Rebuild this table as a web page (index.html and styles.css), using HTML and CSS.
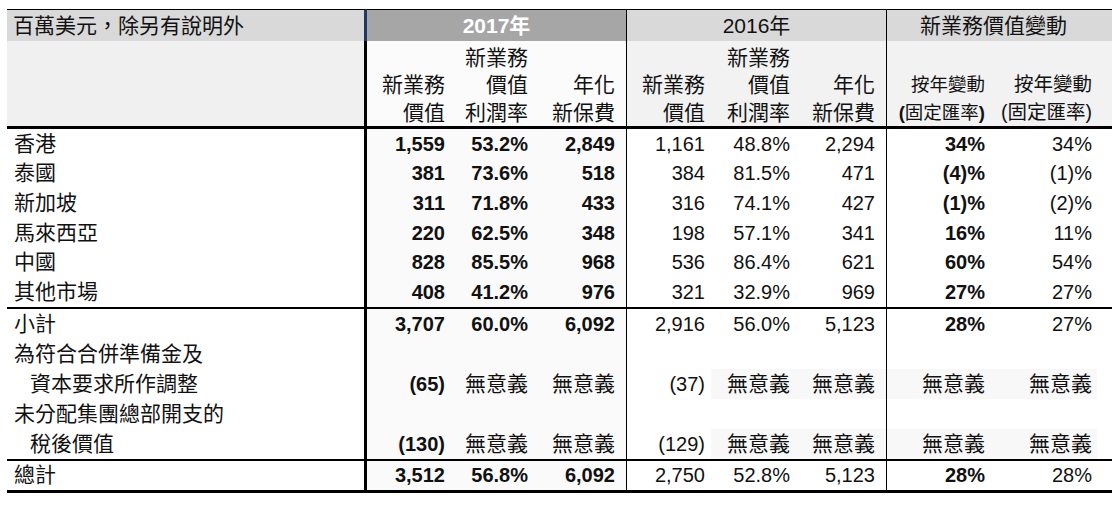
FILE: index.html
```html
<!DOCTYPE html>
<html lang="zh-TW">
<head>
<meta charset="utf-8">
<link rel="stylesheet" href="styles.css">
</head>
<body>
<table class="vonb">
  <colgroup>
    <col class="w0"><col class="w1"><col class="w2"><col class="w3"><col class="w4"><col class="w5"><col class="w6"><col class="w7"><col class="w8">
  </colgroup>
  <thead>
    <tr class="h1">
      <th class="lbl head-lbl">百萬美元，除另有說明外</th>
      <th colspan="3" class="g17 head-17">2017年</th>
      <th colspan="3" class="g16 head-16">2016年</th>
      <th colspan="2" class="gch head-ch">新業務價值變動</th>
    </tr>
    <tr class="h2">
      <th class="lbl sub-lbl"></th>
      <th class="c1 sub17">新業務<br>價值</th>
      <th class="c2 sub17">新業務<br>價值<br>利潤率</th>
      <th class="c3 sub17 sep">年化<br>新保費</th>
      <th class="c4 sub16">新業務<br>價值</th>
      <th class="c5 sub16">新業務<br>價值<br>利潤率</th>
      <th class="c6 sub16 sep">年化<br>新保費</th>
      <th class="c7 subch subch-a">按年變動<br><b class="par">(</b>固定匯率<b class="par">)</b></th>
      <th class="c8 subch">按年變動<br>(固定匯率)</th>
    </tr>
  </thead>
  <tbody class="markets">
    <tr><td class="lbl">香港</td><td class="c1 b y17">1,559</td><td class="c2 b y17">53.2%</td><td class="c3 b y17 sep">2,849</td><td class="c4">1,161</td><td class="c5">48.8%</td><td class="c6 sep">2,294</td><td class="c7 b">34%</td><td class="c8">34%</td></tr>
    <tr><td class="lbl">泰國</td><td class="c1 b y17">381</td><td class="c2 b y17">73.6%</td><td class="c3 b y17 sep">518</td><td class="c4">384</td><td class="c5">81.5%</td><td class="c6 sep">471</td><td class="c7 b">(4)%</td><td class="c8">(1)%</td></tr>
    <tr><td class="lbl">新加坡</td><td class="c1 b y17">311</td><td class="c2 b y17">71.8%</td><td class="c3 b y17 sep">433</td><td class="c4">316</td><td class="c5">74.1%</td><td class="c6 sep">427</td><td class="c7 b">(1)%</td><td class="c8">(2)%</td></tr>
    <tr><td class="lbl">馬來西亞</td><td class="c1 b y17">220</td><td class="c2 b y17">62.5%</td><td class="c3 b y17 sep">348</td><td class="c4">198</td><td class="c5">57.1%</td><td class="c6 sep">341</td><td class="c7 b">16%</td><td class="c8">11%</td></tr>
    <tr><td class="lbl">中國</td><td class="c1 b y17">828</td><td class="c2 b y17">85.5%</td><td class="c3 b y17 sep">968</td><td class="c4">536</td><td class="c5">86.4%</td><td class="c6 sep">621</td><td class="c7 b">60%</td><td class="c8">54%</td></tr>
    <tr class="last"><td class="lbl">其他市場</td><td class="c1 b y17">408</td><td class="c2 b y17">41.2%</td><td class="c3 b y17 sep">976</td><td class="c4">321</td><td class="c5">32.9%</td><td class="c6 sep">969</td><td class="c7 b">27%</td><td class="c8">27%</td></tr>
  </tbody>
  <tbody class="adjust">
    <tr><td class="lbl">小計</td><td class="c1 b y17">3,707</td><td class="c2 b y17">60.0%</td><td class="c3 b y17 sep">6,092</td><td class="c4">2,916</td><td class="c5">56.0%</td><td class="c6 sep">5,123</td><td class="c7 b">28%</td><td class="c8">27%</td></tr>
    <tr><td class="lbl">為符合合併準備金及</td><td class="c1 y17"></td><td class="c2 y17"></td><td class="c3 y17 sep"></td><td class="c4"></td><td class="c5"></td><td class="c6 sep"></td><td class="c7"></td><td class="c8"></td></tr>
    <tr><td class="lbl indent">資本要求所作調整</td><td class="c1 b y17">(65)</td><td class="c2 y17 cjk">無意義</td><td class="c3 y17 sep cjk">無意義</td><td class="c4">(37)</td><td class="c5 shade cjk">無意義</td><td class="c6 sep shade cjk">無意義</td><td class="c7 shade cjk">無意義</td><td class="c8 shade-end cjk">無意義</td></tr>
    <tr><td class="lbl">未分配集團總部開支的</td><td class="c1 y17"></td><td class="c2 y17"></td><td class="c3 y17 sep"></td><td class="c4"></td><td class="c5"></td><td class="c6 sep"></td><td class="c7"></td><td class="c8"></td></tr>
    <tr class="last"><td class="lbl indent">稅後價值</td><td class="c1 b y17">(130)</td><td class="c2 y17 cjk">無意義</td><td class="c3 y17 sep cjk">無意義</td><td class="c4">(129)</td><td class="c5 shade cjk">無意義</td><td class="c6 sep shade cjk">無意義</td><td class="c7 shade cjk">無意義</td><td class="c8 shade-end cjk">無意義</td></tr>
  </tbody>
  <tbody class="total">
    <tr class="last"><td class="lbl">總計</td><td class="c1 b y17">3,512</td><td class="c2 b y17">56.8%</td><td class="c3 b y17 sep">6,092</td><td class="c4">2,750</td><td class="c5">52.8%</td><td class="c6 sep">5,123</td><td class="c7 b">28%</td><td class="c8">28%</td></tr>
  </tbody>
</table>
</body>
</html>
```

FILE: styles.css
```css
html, body {
  margin: 0;
  padding: 0;
  background: #ffffff;
}

body {
  padding: 9px 7px 0 7px;
  font-family: "Liberation Sans", "Noto Sans CJK TC", sans-serif;
  color: #111111;
}

.vonb {
  width: 1105px;
  table-layout: fixed;
  border-collapse: separate;
  border-spacing: 0;
  font-size: 21px;
}

.w0 { width: 360px; }
.w1 { width: 84px; }
.w2 { width: 83px; }
.w3 { width: 93px; }
.w4 { width: 84px; }
.w5 { width: 85px; }
.w6 { width: 91px; }
.w7 { width: 108px; }
.w8 { width: 117px; }

th, td {
  padding: 0;
  box-sizing: border-box;
  white-space: nowrap;
  overflow: hidden;
}

th { font-weight: normal; }

/* header row 1 */
.h1 th {
  height: 32px;
  border-top: 1px solid #000;
  background: #d9d9d9;
  line-height: 28px;
  vertical-align: middle;
  text-align: center;
  padding-top: 1px;
}

.h1 .head-lbl {
  text-align: left;
  padding-left: 6px;
  border-right: 3px solid #1f3864;
}

.h1 .head-17 {
  background: #a6a6a6;
  color: #ffffff;
  font-weight: bold;
  border-right: 1px solid #000;
}

.h1 .head-16 {
  border-right: 1px solid #000;
}

.h1 .head-ch {
  padding-left: 0;
  padding-right: 12px;
}

/* header row 2 */
.h2 th {
  height: 88px;
  border-bottom: 3px solid #000;
  line-height: 27.5px;
  vertical-align: bottom;
  text-align: right;
  padding-bottom: 0;
  background: #f2f2f2;
}

.h2 .sub-lbl {
  background: #f0f0f0;
  border-right: 3px solid #000;
}

.h2 .sub17 { background: #fbfbfb; }

.h2 .subch { font-size: 19.5px; }
.h2 .subch-a { font-size: 18.5px; }

.par { font-weight: bold; }

/* body */
td {
  line-height: 24px;
  vertical-align: middle;
  text-align: right;
  font-size: 20px;
}

td.lbl {
  text-align: left;
  padding-left: 7px;
  font-size: 21px;
  border-right: 3px solid #000;
}

td.indent { padding-left: 23px; }

td.cjk { font-size: 21px; }

.markets tr { height: 29.67px; }
.adjust tr { height: 30px; }
.total tr { height: 29px; }

.markets tr.last td,
.adjust tr.last td {
  border-bottom: 2px solid #000;
}
.markets tr.last { height: 31.67px; }
.adjust tr.last { height: 32px; }

.total tr.last td { border-bottom: 3px solid #000; }
.total tr.last { height: 32px; }

.b { font-weight: bold; }

.y17 { background: #fafafa; }

.shade { background: #f8f8f8; }

.shade-end {
  background: linear-gradient(to right, #f8f8f8 calc(100% - 15px), transparent 0);
}

.c1, .c2, .c4, .c5 { padding-right: 6px; }
.c3, .c6 { padding-right: 11px; }
.c7 { padding-right: 10px; }
.c8 { padding-right: 20px; }

.sep { border-right: 1px solid #000; }
```
